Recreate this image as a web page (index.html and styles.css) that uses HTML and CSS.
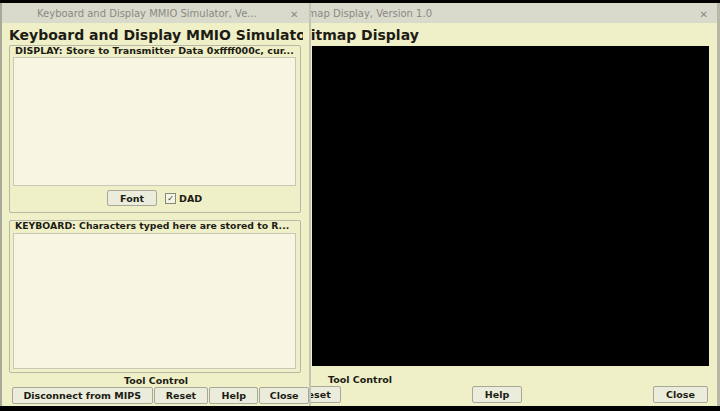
FILE: index.html
```html
<!DOCTYPE html>
<html>
<head>
<meta charset="utf-8">
<link rel="stylesheet" href="styles.css">
</head>
<body>
<div class="desktop">
  <div class="win back">
    <div class="titlebar back-title">
      <span class="title-text">Bitmap Display, Version 1.0</span>
      <span class="close-x">&#x2715;</span>
    </div>
    <div class="heading back-heading">Bitmap Display</div>
    <div class="canvas"></div>
    <div class="tool-label back-tool">Tool Control</div>
    <div class="btn-row back-row">
      <button class="btn b-reset2">Reset</button>
      <button class="btn b-help2">Help</button>
      <button class="btn b-close2">Close</button>
    </div>
  </div>

  <div class="win front">
    <div class="titlebar front-title">
      <span class="title-text">Keyboard and Display MMIO Simulator, Ve...</span>
      <span class="close-x">&#x2715;</span>
    </div>
    <div class="heading front-heading"><span>Keyboard and Display MMIO Simulator</span></div>
    <div class="panel display-panel">
      <div class="panel-label">DISPLAY: Store to Transmitter Data 0xffff000c, cur...</div>
      <div class="textarea display-area"></div>
      <div class="font-row">
        <button class="btn b-font">Font</button>
        <span class="check"><span class="box">&#x2713;</span>DAD</span>
      </div>
    </div>
    <div class="panel kb-panel">
      <div class="panel-label">KEYBOARD: Characters typed here are stored to R...</div>
      <div class="textarea kb-area"></div>
    </div>
    <div class="tool-label front-tool">Tool Control</div>
    <div class="btn-row front-row">
      <button class="btn b-disc">Disconnect from MIPS</button>
      <button class="btn b-reset">Reset</button>
      <button class="btn b-help">Help</button>
      <button class="btn b-close">Close</button>
    </div>
  </div>
</div>
</body>
</html>
```

FILE: styles.css
```css
html, body {
  margin: 0;
  padding: 0;
  background: #000;
}
.desktop {
  position: relative;
  width: 720px;
  height: 411px;
  background: #000;
  overflow: hidden;
  font-family: "DejaVu Sans", sans-serif;
  color: #1c1c14;
}
.win {
  position: absolute;
  top: 3px;
  height: 403px;
  background: #efefc8;
  box-sizing: border-box;
  display: flex;
  flex-direction: column;
  overflow: hidden;
}
.back {
  left: 290px;
  width: 430px;
  border-right: 3px solid #b8b8a8;
}
.front {
  left: 0;
  width: 311px;
  border-left: 2px solid #a8a898;
  border-right: 2px solid #c4c4b4;
}
.titlebar {
  height: 20px;
  flex: none;
  background: #d9d9cc;
  display: flex;
  align-items: center;
  position: relative;
  font-size: 9.5px;
  color: #8a8a84;
}
.front-title .title-text {
  margin-left: 35px;
  font-size: 10px;
}
.back-title .title-text {
  margin-left: 4px;
  font-size: 10px;
}
.close-x {
  position: absolute;
  top: 6px;
  font-size: 10px;
  color: #8a8a84;
}
.front-title .close-x { left: 288px; }
.back-title .close-x { right: 9px; }
.heading {
  font-weight: bold;
  font-size: 14px;
  white-space: nowrap;
  margin-top: 4px;
  height: 16px;
  line-height: 16px;
  flex: none;
}
.front-heading {
  margin-left: 7px;
  width: 294px;
  overflow: hidden;
}
.back-heading { margin-left: 10px; }
.canvas {
  margin: 3px 8px 0 22px;
  height: 320px;
  background: #000;
  flex: none;
}
.panel {
  margin-left: 7px;
  width: 292px;
  border: 1px solid #b8b8a8;
  border-radius: 2px;
  box-sizing: border-box;
  display: flex;
  flex-direction: column;
  flex: none;
}
.display-panel {
  margin-top: 2px;
  height: 168px;
}
.kb-panel {
  margin-top: 7px;
  height: 153px;
}
.panel-label {
  font-size: 9.5px;
  font-weight: bold;
  white-space: nowrap;
  margin-left: 5px;
  height: 10px;
  line-height: 10px;
}
.kb-panel .panel-label {
  font-size: 9.3px;
}
.textarea {
  margin: 1px 4px 0 3px;
  background: #f6f6e2;
  border: 1px solid #c8c8b8;
  box-sizing: border-box;
  flex: none;
}
.display-area { height: 129px; }
.kb-area { height: 136px; margin-top: 2px; }
.font-row {
  display: flex;
  align-items: center;
  margin-top: 4px;
  margin-left: 97px;
  gap: 8px;
}
.btn {
  font-family: "DejaVu Sans", sans-serif;
  font-weight: bold;
  font-size: 9.5px;
  color: #1c1c14;
  background: #ececdc;
  border: 1px solid #a8a898;
  border-radius: 2px;
  height: 17px;
  padding: 0;
  margin: 0;
  box-sizing: border-box;
}
.b-font { width: 50px; height: 16px; }
.check {
  display: flex;
  align-items: center;
  font-size: 9.5px;
  font-weight: bold;
  gap: 3px;
}
.box {
  width: 9px;
  height: 9px;
  border: 1px solid #8a8a7a;
  background: #f4f4e4;
  font-size: 8px;
  line-height: 9px;
  text-align: center;
  color: #333;
}
.tool-label {
  font-size: 9.5px;
  font-weight: bold;
  height: 12px;
  line-height: 12px;
  flex: none;
}
.front-tool {
  margin-top: 2px;
  margin-left: 122px;
}
.back-tool {
  margin-top: 8px;
  margin-left: 38px;
}
.btn-row {
  display: flex;
  margin-top: 0;
  flex: none;
}
.front-row { margin-left: 10px; gap: 1px; }
.b-disc { width: 141px; }
.b-reset { width: 55px; }
.b-help { width: 49px; }
.b-close { width: 50px; }
.back-row { margin-left: 0; }
.b-reset2 { width: 51px; }
.b-help2 { width: 50px; margin-left: 131px; }
.b-close2 { width: 55px; margin-left: 131px; }
```
